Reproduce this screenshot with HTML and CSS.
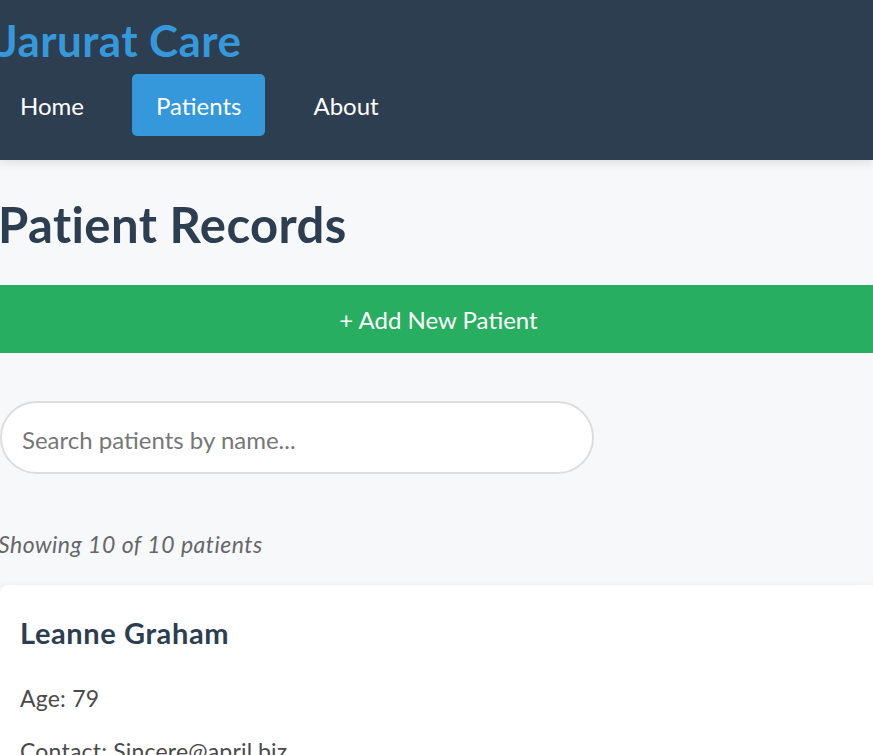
FILE: index.html
```html
<!DOCTYPE html>
<html lang="en">
<head>
<meta charset="utf-8">
<title>Jarurat Care - Patients</title>
<link rel="stylesheet" href="styles.css">
</head>
<body>
<header class="site-header">
  <div class="brand">Jarurat Care</div>
  <nav class="nav">
    <a class="nav-link" href="#">Home</a>
    <a class="nav-link active" href="#">Patients</a>
    <a class="nav-link" href="#">About</a>
  </nav>
</header>
<main class="page">
  <h1 class="page-title">Patient Records</h1>
  <button class="add-btn" type="button">+ Add New Patient</button>
  <div class="search-row">
    <input class="search" type="text" placeholder="Search patients by name...">
  </div>
  <p class="count">Showing 10 of 10 patients</p>
  <div class="card-list">
    <article class="card">
      <h3 class="card-name">Leanne Graham</h3>
      <p class="card-line">Age: 79</p>
      <p class="card-line">Contact: Sincere@april.biz</p>
    </article>
  </div>
</main>
</body>
</html>
```
FILE: styles.css
```css
* { box-sizing: border-box; }
html, body { margin: 0; padding: 0; }
body {
  background: #f7f8fa;
  font-family: Lato, "Open Sans", sans-serif;
  color: #2c3e50;
  overflow: hidden;
}
.site-header {
  background: #2c3e50;
  padding: 15px 0 24px;
  box-shadow: 0 2px 10px rgba(0,0,0,0.12);
  position: relative;
  z-index: 1;
}
.brand {
  font-size: 44px;
  line-height: 51px;
  font-weight: 700;
  letter-spacing: 0.4px;
  color: #3498db;
  margin-left: -1px;
}
.nav {
  display: flex;
  gap: 24px;
  margin-top: 8px;
  margin-left: -4px;
}
.nav-link {
  color: #fff;
  text-decoration: none;
  font-size: 24px;
  line-height: 38px;
  padding: 13px 24px 11px;
  border-radius: 5px;
}
.nav-link.active { background: #3498db; }
.page {
  width: 877px;
  padding-top: 36px;
}
.page-title {
  font-size: 49px;
  line-height: 56px;
  font-weight: 700;
  letter-spacing: 0.4px;
  margin: 0 0 33px;
  margin-left: -2px;
}
.add-btn {
  display: block;
  width: 100%;
  border: 0;
  background: #27ae60;
  color: #fff;
  font-family: inherit;
  font-size: 24px;
  line-height: 28px;
  padding: 21px 20px 19px;
}
.search-row { margin-top: 48px; }
.search {
  width: 594px;
  height: 73px;
  border: 2px solid #dddddd;
  border-radius: 999px;
  background: #fff;
  padding: 21px 20px 18px;
  font-family: inherit;
  font-size: 24px;
  line-height: 30px;
  color: #2c3e50;
  outline: none;
}
.search::placeholder { color: #777; }
.count {
  margin: 57px 0 28px;
  font-size: 23px;
  line-height: 26px;
  letter-spacing: 0.5px;
  font-style: italic;
  color: #666;
  margin-left: -2px;
}
.card {
  background: #fff;
  border-radius: 8px;
  box-shadow: 0 2px 10px rgba(0,0,0,0.08);
  padding: 31px 20px 20px;
}
.card-name {
  margin: 0;
  font-size: 29px;
  line-height: 34px;
  font-weight: 700;
  letter-spacing: 0.6px;
}
.card-line {
  margin: 34px 0 0;
  font-size: 23px;
  line-height: 28px;
  letter-spacing: 0.2px;
  color: #4a4a4a;
}
.card-line + .card-line { margin-top: 25px; }
```
